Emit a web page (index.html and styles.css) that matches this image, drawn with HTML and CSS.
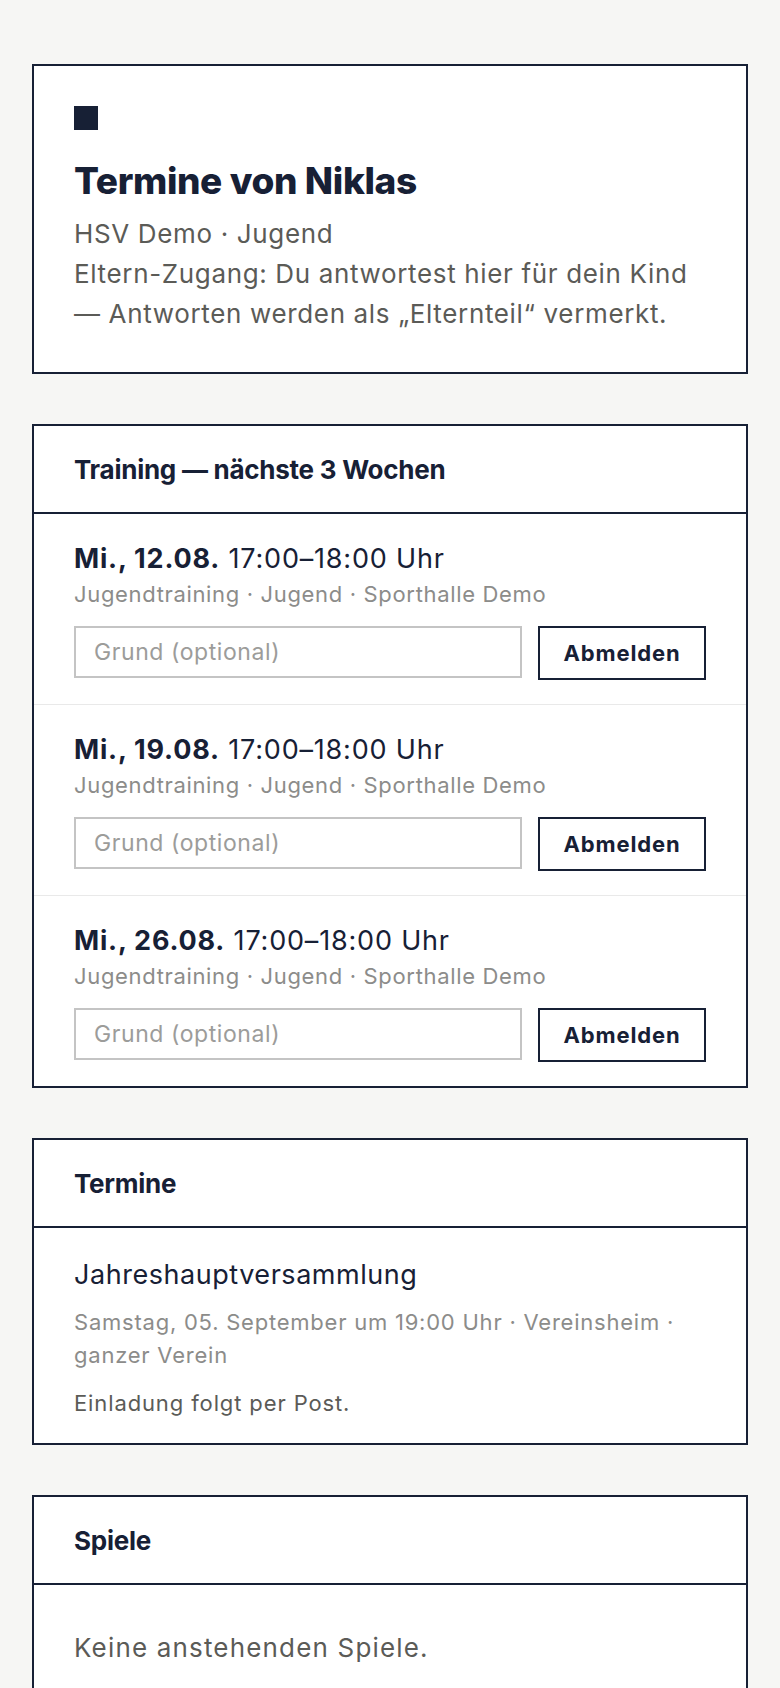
FILE: index.html
```html
<!DOCTYPE html>
<html lang="de">
<head>
<meta charset="utf-8">
<title>Termine von Niklas</title>
<link rel="stylesheet" href="styles.css">
</head>
<body>
<main class="page">
  <section class="card intro">
    <div class="mark"></div>
    <h1 class="title">Termine von Niklas</h1>
    <p class="sub">HSV Demo · Jugend</p>
    <p class="sub">Eltern-Zugang: Du antwortest hier für dein Kind<br>— Antworten werden als „Elternteil“ vermerkt.</p>
  </section>

  <section class="card">
    <h2 class="card-head">Training — nächste 3 Wochen</h2>
    <div class="row">
      <div class="when"><strong>Mi., 12.08.</strong> 17:00–18:00 Uhr</div>
      <div class="meta">Jugendtraining · Jugend · Sporthalle Demo</div>
      <form class="act">
        <input class="reason" type="text" placeholder="Grund (optional)">
        <button class="btn" type="button">Abmelden</button>
      </form>
    </div>
    <div class="row">
      <div class="when"><strong>Mi., 19.08.</strong> 17:00–18:00 Uhr</div>
      <div class="meta">Jugendtraining · Jugend · Sporthalle Demo</div>
      <form class="act">
        <input class="reason" type="text" placeholder="Grund (optional)">
        <button class="btn" type="button">Abmelden</button>
      </form>
    </div>
    <div class="row">
      <div class="when"><strong>Mi., 26.08.</strong> 17:00–18:00 Uhr</div>
      <div class="meta">Jugendtraining · Jugend · Sporthalle Demo</div>
      <form class="act">
        <input class="reason" type="text" placeholder="Grund (optional)">
        <button class="btn" type="button">Abmelden</button>
      </form>
    </div>
  </section>

  <section class="card">
    <h2 class="card-head">Termine</h2>
    <div class="event">
      <div class="event-title">Jahreshauptversammlung</div>
      <div class="event-meta">Samstag, 05. September um 19:00 Uhr · Vereinsheim · ganzer Verein</div>
      <div class="event-note">Einladung folgt per Post.</div>
    </div>
  </section>

  <section class="card">
    <h2 class="card-head">Spiele</h2>
    <p class="empty">Keine anstehenden Spiele.</p>
  </section>
</main>
</body>
</html>
```

FILE: styles.css
```css
* { box-sizing: border-box; }

html, body {
  margin: 0;
  padding: 0;
  background: #f6f6f4;
}

body {
  font-family: Inter, "Liberation Sans", sans-serif;
  color: #172035;
}

.page {
  padding: 64px 32px 40px;
  display: flex;
  flex-direction: column;
  gap: 50px;
}

.card {
  background: #ffffff;
  border: 2px solid #172035;
}

.intro {
  padding: 40px 40px 38px;
}

.mark {
  width: 24px;
  height: 24px;
  background: #172035;
}

.title {
  margin: 28px 0 0;
  font-size: 37px;
  line-height: 46px;
  font-weight: 800;
  letter-spacing: -0.01em;
}

.sub {
  margin: 0;
  font-size: 26px;
  line-height: 40px;
  color: #5b5b57;
  letter-spacing: 0.025em;
}

.title + .sub { margin-top: 10px; }

.card-head {
  margin: 0;
  padding: 28px 40px 26px;
  border-bottom: 2px solid #172035;
  font-size: 26px;
  line-height: 32px;
  font-weight: 700;
  letter-spacing: -0.01em;
}

.row {
  padding: 28px 40px 24px;
}

.row + .row {
  border-top: 1px solid #e9e9e9;
}

.when {
  font-size: 27px;
  line-height: 34px;
  letter-spacing: 0.03em;
}

.when strong { font-weight: 700; }

.meta {
  margin-top: 4px;
  font-size: 22px;
  line-height: 28px;
  color: #8c8c8a;
  letter-spacing: 0.03em;
}

.act {
  margin: 18px 0 0;
  display: flex;
  align-items: flex-start;
  gap: 16px;
  height: 54px;
}

.reason {
  flex: 1;
  min-width: 0;
  height: 52px;
  border: 2px solid #c4c4c4;
  background: #fff;
  padding: 0 18px;
  font-family: inherit;
  font-size: 23px;
  color: #172035;
  border-radius: 0;
  outline: none;
  letter-spacing: 0.025em;
}

.reason::placeholder {
  color: #9c9c9a;
}

.btn {
  width: 168px;
  height: 54px;
  border: 2px solid #172035;
  background: #fff;
  color: #172035;
  font-family: inherit;
  font-size: 22px;
  font-weight: 700;
  letter-spacing: 0.04em;
  border-radius: 0;
  padding: 0;
}

.event {
  padding: 28px 40px 25px;
}

.event-title {
  font-size: 27px;
  line-height: 38px;
  letter-spacing: 0.02em;
}

.event-meta {
  margin-top: 12px;
  font-size: 22px;
  line-height: 33px;
  color: #8c8c8a;
  letter-spacing: 0.035em;
}

.event-note {
  margin-top: 16px;
  font-size: 22px;
  line-height: 30px;
  color: #5b5b57;
  letter-spacing: 0.04em;
}

.empty {
  margin: 0;
  padding: 44px 40px 40px;
  font-size: 26px;
  line-height: 38px;
  color: #5b5b57;
  letter-spacing: 0.045em;
}
```
